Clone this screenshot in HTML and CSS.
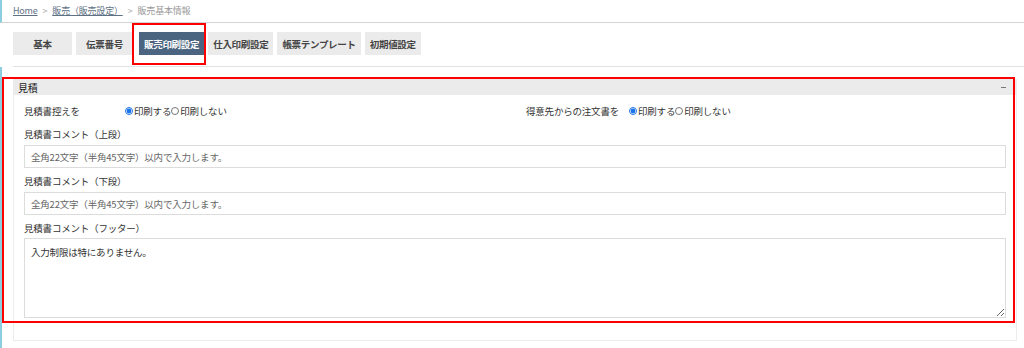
FILE: index.html
```html
<!DOCTYPE html>
<html lang="ja">
<head>
    <meta charset="UTF-8">
    <meta name="viewport" content="width=device-width, initial-scale=1.0">
    <title>販売基本情報</title>
    <link rel="stylesheet" href="styles.css">
</head>
<body>
    <div class="page">
        <div class="breadcrumb">
            <a href="#">Home</a>
            <span class="sep">&gt;</span>
            <a href="#">販売（販売設定）</a>
            <span class="sep">&gt;</span>
            <span class="current">販売基本情報</span>
        </div>

        <div class="tabs">
            <a class="tab tab-w1" href="#">基本</a>
            <a class="tab tab-w2" href="#">伝票番号</a>
            <a class="tab tab-active" href="#">販売印刷設定</a>
            <a class="tab" href="#">仕入印刷設定</a>
            <a class="tab" href="#">帳票テンプレート</a>
            <a class="tab" href="#">初期値設定</a>
        </div>

        <div class="content">
            <div class="panel">
                <div class="panel-head">
                    <span>見積</span>
                    <span class="toggle"></span>
                </div>
                <div class="panel-body">
                    <div class="radio-row">
                        <div class="radio-field">
                            <span class="radio-label">見積書控えを</span>
                            <label><input type="radio" name="copy" checked>印刷する</label>
                            <label><input type="radio" name="copy">印刷しない</label>
                        </div>
                        <div class="radio-field">
                            <span class="radio-label">得意先からの注文書を</span>
                            <label><input type="radio" name="order" checked>印刷する</label>
                            <label><input type="radio" name="order">印刷しない</label>
                        </div>
                    </div>

                    <label class="field-label" for="upper">見積書コメント（上段）</label>
                    <input class="text-input" type="text" id="upper" placeholder="全角22文字（半角45文字）以内で入力します。">

                    <label class="field-label" for="lower">見積書コメント（下段）</label>
                    <input class="text-input" type="text" id="lower" placeholder="全角22文字（半角45文字）以内で入力します。">

                    <label class="field-label" for="footer">見積書コメント（フッター）</label>
                    <textarea class="text-area" id="footer">入力制限は特にありません。</textarea>
                </div>
            </div>
        </div>

        <div class="mark mark-tab"></div>
        <div class="mark mark-panel"></div>
    </div>
</body>
</html>
```

FILE: styles.css
```css
body {
    margin: 0;
    background: #fff;
    font-family: "Noto Sans CJK JP", "Noto Sans", sans-serif;
    font-size: 9.5px;
    letter-spacing: -0.2px;
    color: #333;
}
.page {
    position: relative;
    width: 1024px;
    height: 348px;
    overflow: hidden;
}
.breadcrumb {
    height: 23px;
    padding: 0 0 1px 11px;
    border-left: 2px solid #8ccde0;
    border-bottom: 1px solid #d4d4d4;
    display: flex;
    align-items: center;
    gap: 5px;
    box-sizing: border-box;
    font-size: 9px;
    color: #999;
    line-height: 1;
}
.breadcrumb a {
    color: #5e7184;
    text-decoration: underline;
}
.breadcrumb .sep {
    color: #aaa;
}
.tabs {
    display: flex;
    gap: 4px;
    margin: 9px 0 0 13px;
    height: 23px;
    padding-bottom: 11px;
    border-bottom: 1px solid #e2e2e2;
}
.tab {
    display: flex;
    align-items: center;
    justify-content: center;
    padding: 0 5px;
    background: #ebebeb;
    color: #444;
    font-weight: bold;
    font-size: 9.5px;
    letter-spacing: -0.3px;
    text-decoration: none;
}
.tab-w1 {
    width: 49px;
}
.tab-w2 {
    width: 47px;
    margin-right: 2px;
}
.tab-active {
    background: #4b6580;
    color: #fff;
}
.content {
    border-left: 2px solid #8ccde0;
    padding: 12px 7px 0 11px;
    height: 300px;
}
.panel {
    border: 1px solid #ececec;
    border-top: none;
    height: 261px;
}
.panel-head {
    display: flex;
    justify-content: space-between;
    align-items: center;
    height: 16px;
    padding: 0 10px 0 4px;
    background: #ebebeb;
    color: #222;
    font-size: 10px;
}
.toggle {
    width: 5px;
    height: 1px;
    background: #777;
}
.panel-body {
    padding: 4px 10px 0 10px;
}
.radio-row {
    display: grid;
    grid-template-columns: 1fr 1fr;
    gap: 22px;
    height: 24px;
    align-items: center;
    margin-bottom: 4px;
}
.radio-field {
    display: flex;
    align-items: center;
}
.radio-field .radio-label {
    width: 101px;
}
.radio-field:last-child .radio-label {
    width: 103px;
}
.radio-field label {
    display: flex;
    align-items: center;
}
.radio-field input {
    width: 8px;
    height: 8px;
    margin: 0 1px 0 0;
    accent-color: #1a73e8;
}
.field-label {
    display: block;
    height: 14px;
    line-height: 14px;
    margin-bottom: 4px;
}
.text-input {
    display: block;
    width: 100%;
    height: 23px;
    box-sizing: border-box;
    border: 1px solid #dcdcdc;
    padding: 0 6px;
    margin-bottom: 6px;
    font-family: inherit;
    font-size: 9.5px;
    letter-spacing: -0.2px;
    color: #333;
}
.text-input::placeholder {
    color: #666;
}
.text-area {
    display: block;
    width: 100%;
    height: 80px;
    box-sizing: border-box;
    border: 1px solid #dcdcdc;
    padding: 6px;
    margin-top: -1px;
    font-family: inherit;
    font-size: 9.5px;
    letter-spacing: -0.2px;
    color: #333;
}
.mark {
    position: absolute;
    border: 2px solid #f00;
    box-sizing: border-box;
}
.mark-tab {
    left: 132px;
    top: 23px;
    width: 74px;
    height: 42px;
}
.mark-panel {
    left: 2px;
    top: 77px;
    width: 1013px;
    height: 246px;
}
```
